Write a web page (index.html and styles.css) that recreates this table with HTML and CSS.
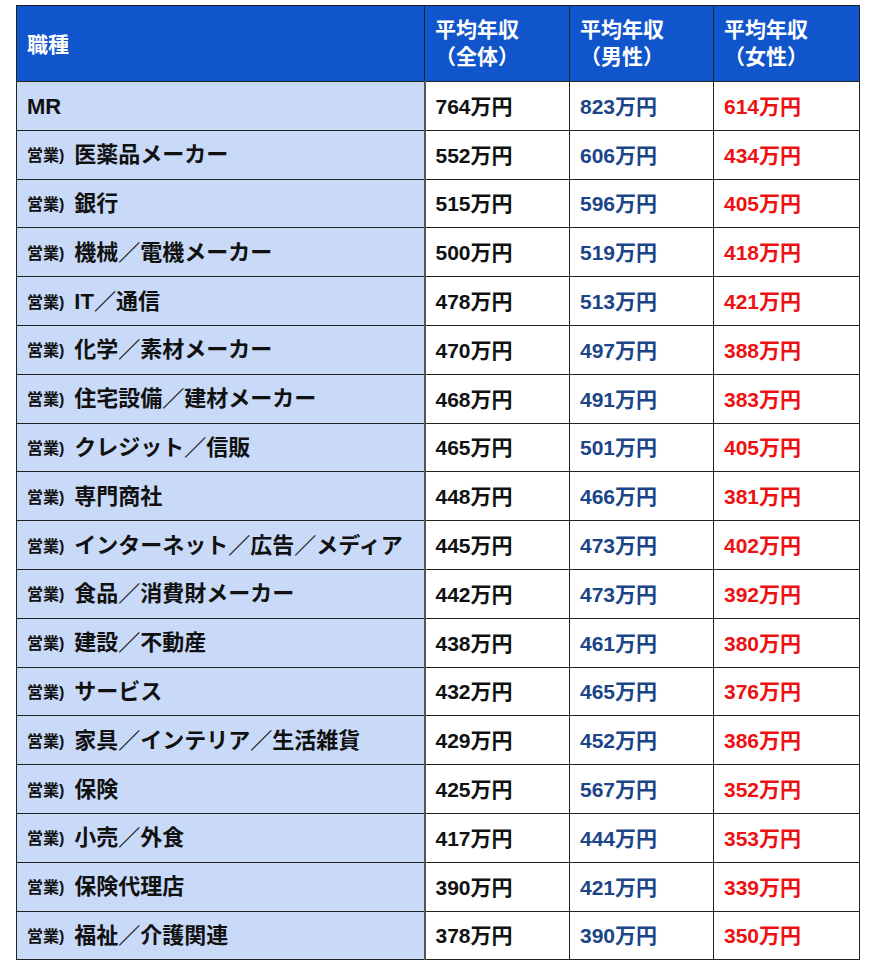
FILE: index.html
```html
<!DOCTYPE html>
<html lang="ja">
<head>
<meta charset="utf-8">
<link rel="stylesheet" href="styles.css">
</head>
<body>
<table class="tbl">
  <colgroup>
    <col class="c1"><col class="c2"><col class="c3"><col class="c4">
  </colgroup>
  <thead>
    <tr>
      <th class="h-job">職種</th>
      <th>平均年収<br>（全体）</th>
      <th>平均年収<br>（男性）</th>
      <th>平均年収<br>（女性）</th>
    </tr>
  </thead>
  <tbody>
    <tr><td class="job">MR</td><td class="all">764万円</td><td class="male">823万円</td><td class="female">614万円</td></tr>
    <tr><td class="job"><span class="pre">営業)</span>医薬品メーカー</td><td class="all">552万円</td><td class="male">606万円</td><td class="female">434万円</td></tr>
    <tr><td class="job"><span class="pre">営業)</span>銀行</td><td class="all">515万円</td><td class="male">596万円</td><td class="female">405万円</td></tr>
    <tr><td class="job"><span class="pre">営業)</span>機械／電機メーカー</td><td class="all">500万円</td><td class="male">519万円</td><td class="female">418万円</td></tr>
    <tr><td class="job"><span class="pre">営業)</span>IT／通信</td><td class="all">478万円</td><td class="male">513万円</td><td class="female">421万円</td></tr>
    <tr><td class="job"><span class="pre">営業)</span>化学／素材メーカー</td><td class="all">470万円</td><td class="male">497万円</td><td class="female">388万円</td></tr>
    <tr><td class="job"><span class="pre">営業)</span>住宅設備／建材メーカー</td><td class="all">468万円</td><td class="male">491万円</td><td class="female">383万円</td></tr>
    <tr><td class="job"><span class="pre">営業)</span>クレジット／信販</td><td class="all">465万円</td><td class="male">501万円</td><td class="female">405万円</td></tr>
    <tr><td class="job"><span class="pre">営業)</span>専門商社</td><td class="all">448万円</td><td class="male">466万円</td><td class="female">381万円</td></tr>
    <tr><td class="job"><span class="pre">営業)</span>インターネット／広告／メディア</td><td class="all">445万円</td><td class="male">473万円</td><td class="female">402万円</td></tr>
    <tr><td class="job"><span class="pre">営業)</span>食品／消費財メーカー</td><td class="all">442万円</td><td class="male">473万円</td><td class="female">392万円</td></tr>
    <tr><td class="job"><span class="pre">営業)</span>建設／不動産</td><td class="all">438万円</td><td class="male">461万円</td><td class="female">380万円</td></tr>
    <tr><td class="job"><span class="pre">営業)</span>サービス</td><td class="all">432万円</td><td class="male">465万円</td><td class="female">376万円</td></tr>
    <tr><td class="job"><span class="pre">営業)</span>家具／インテリア／生活雑貨</td><td class="all">429万円</td><td class="male">452万円</td><td class="female">386万円</td></tr>
    <tr><td class="job"><span class="pre">営業)</span>保険</td><td class="all">425万円</td><td class="male">567万円</td><td class="female">352万円</td></tr>
    <tr><td class="job"><span class="pre">営業)</span>小売／外食</td><td class="all">417万円</td><td class="male">444万円</td><td class="female">353万円</td></tr>
    <tr><td class="job"><span class="pre">営業)</span>保険代理店</td><td class="all">390万円</td><td class="male">421万円</td><td class="female">339万円</td></tr>
    <tr><td class="job"><span class="pre">営業)</span>福祉／介護関連</td><td class="all">378万円</td><td class="male">390万円</td><td class="female">350万円</td></tr>
  </tbody>
</table>
</body>
</html>
```

FILE: styles.css
```css
html, body {
  margin: 0;
  padding: 0;
  background: #ffffff;
}
body {
  padding: 5px 0 0 16px;
  font-family: "Liberation Sans", "Noto Sans CJK JP", sans-serif;
  font-weight: bold;
}
.tbl {
  border-collapse: collapse;
  table-layout: fixed;
  width: 843px;
}
.c1 { width: 408px; }
.c2 { width: 145px; }
.c3 { width: 144px; }
.c4 { width: 146px; }
.tbl th, .tbl td {
  border: 1px solid #222;
  text-align: left;
  padding: 0 0 0 10px;
  white-space: nowrap;
}
.tbl th {
  background: #1155cc;
  color: #ffffff;
  font-size: 21px;
  line-height: 27px;
  height: 76px;
  box-sizing: border-box;
  vertical-align: middle;
  padding-bottom: 2px;
}
.tbl th.h-job {
  padding-top: 2px;
  padding-bottom: 0;
}
.tbl td {
  height: 48.8px;
  box-sizing: border-box;
  font-size: 21px;
  line-height: 24px;
  vertical-align: middle;
  padding-top: 2px;
  color: #111;
}
.tbl td.job {
  background: #c9daf8;
  border-right: 2px solid #555;
  font-size: 22px;
}
.pre {
  font-size: 16px;
  margin-right: 10px;
  vertical-align: 1px;
}
.tbl td.all { color: #111; }
.tbl td.male { color: #1c4587; }
.tbl td.female { color: #ee1111; }
```
